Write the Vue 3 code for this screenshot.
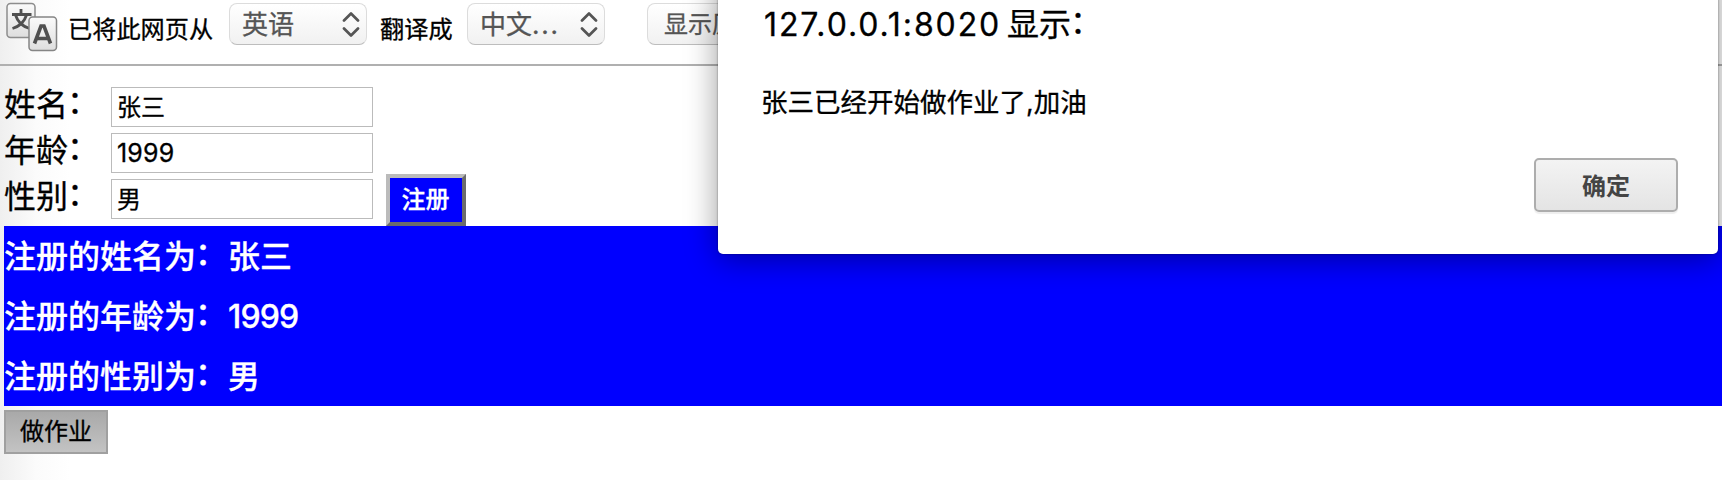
<script setup>
const fields = [
  { label: '姓名', value: '张三' },
  { label: '年龄', value: '1999' },
  { label: '性别', value: '男' },
]
</script>

<template>
  <div class="page">
    <header class="bar">
      <svg class="logo" width="54" height="54" viewBox="0 0 54 54">
        <defs>
          <linearGradient id="tile" x1="0" y1="0" x2="0" y2="1">
            <stop offset="0" stop-color="#fbfbfb" />
            <stop offset="1" stop-color="#dedede" />
          </linearGradient>
        </defs>
        <rect x="2" y="3.5" width="28" height="34" rx="3.5" fill="url(#tile)" stroke="#8d8d8d" stroke-width="1.5" />
        <path d="M16 9v4.500M7 14.500h19.500M10.500 15c2 6.500 6 11 14 13.500M21.500 15c-2 6.500-6 11-14 13.500" fill="none" stroke="#505050" stroke-width="2.800" />
        <rect x="24" y="17" width="27.500" height="33.500" rx="3.500" fill="url(#tile)" stroke="#858585" stroke-width="1.500" />
        <path d="M29.500 43.500 36 26h3l6.500 17.500M32 38.500h11.500" fill="none" stroke="#505050" stroke-width="3.600" />
      </svg>
      <span class="bar-text from">已将此网页从</span>
      <div class="select first">
        <span>英语</span>
        <svg width="18" height="26" viewBox="0 0 18 26"><path d="M2 9.500 9 2.500l7 7M2 17.500l7 7 7-7" /></svg>
      </div>
      <span class="bar-text to">翻译成</span>
      <div class="select second">
        <span>中文<i class="dots">...</i></span>
        <svg width="18" height="26" viewBox="0 0 18 26"><path d="M2 9.500 9 2.500l7 7M2 17.500l7 7 7-7" /></svg>
      </div>
      <div class="original">显示原文</div>
    </header>

    <main class="content">
      <form class="form" @submit.prevent>
        <div v-for="(f, i) in fields" :key="f.label" class="row">
          <label>{{ f.label }}<span class="colon">：</span></label>
          <div class="input" :class="{ latin: i === 1 }"><span>{{ f.value }}</span></div>
          <button v-if="i === 2" class="register"><span>注册</span></button>
        </div>
      </form>
      <section class="result">
        <p v-for="(f, i) in fields" :key="f.label">注册的{{ f.label }}为<span class="colon">：</span><span :class="{ year: i === 1 }">{{ f.value }}</span></p>
      </section>
      <button class="homework">做作业</button>
    </main>

    <div class="dialog">
      <h1><span class="host">127.0.0.1:8020</span>显示<span class="colon">：</span></h1>
      <p class="message">张三已经开始做作业了,加油</p>
      <button class="ok">确定</button>
    </div>
  </div>
</template>

<style>
html, body { margin: 0; background: #fff; }
</style>

<style scoped>
.page {
  position: relative;
  width: 1722px;
  height: 480px;
  overflow: hidden;
  color: #000;
  background: linear-gradient(90deg, #efefef 0, #fbfbfb 36px, #fff 70px);
  font-family: Inter, "Noto Sans CJK SC", sans-serif;
  -webkit-text-stroke-width: .3px;
}
button { font-family: inherit; box-sizing: border-box; padding: 0; margin: 0; }
.bar {
  box-sizing: border-box;
  height: 66px;
  border-bottom: 2px solid #b0b0b0;
  display: flex;
  align-items: flex-start;
  padding-left: 5px;
  white-space: nowrap;
}
.logo { flex: none; }
.bar-text { font-size: 24.2px; line-height: 36px; padding-top: 12px; }
.from { width: 161px; margin-left: 9px; }
.to { width: 87px; margin-left: 13px; }
.select, .original {
  box-sizing: border-box;
  height: 42px;
  margin-top: 3px;
  border: 1px solid #dcdcdc;
  border-bottom-color: #bdbdbd;
  border-radius: 8px;
  background: linear-gradient(#fff, #f1f1f1);
  color: #555;
}
.select {
  flex: none;
  width: 138px;
  display: flex;
  align-items: center;
  justify-content: space-between;
  padding: 0 6px 0 12px;
  font-size: 26px;
  line-height: 40px;
}
.select span { padding-top: 2px; }
.select path { fill: none; stroke: #555; stroke-width: 2.7; stroke-linecap: round; stroke-linejoin: round; }
.dots { font-style: normal; letter-spacing: 1.8px; }
.original { flex: none; width: 150px; margin-left: 42px; padding-left: 16px; font-size: 24px; line-height: 42px; }
.content { padding: 21px 0 0 4px; }
.row { display: flex; height: 46px; align-items: flex-start; }
label { width: 107px; font-size: 32px; line-height: 36px; white-space: nowrap; }
.colon { display: inline-block; width: 1em; transform: translate(-1px, -3px); }
.input {
  box-sizing: border-box;
  width: 262px;
  height: 40px;
  padding-left: 5px;
  border: 1px solid #bbb;
  background: #fff;
  font-size: 24px;
  line-height: 40px;
}
.latin { font-size: 25px; line-height: 39px; letter-spacing: .2px; }
.register {
  width: 80px;
  height: 52px;
  margin: -5px 0 0 13px;
  border: 4px solid;
  border-color: #bbb #6c6c6c #6c6c6c #bbb;
  background: #00f;
  color: #fff;
  font-size: 24px;
  font-weight: 500;
  line-height: 42px;
}
.register span { margin-left: -1px; }
.result { margin-top: 1px; height: 180px; background: #00f; color: #fff; font-size: 32px; font-weight: 500; }
.result p { margin: 0; height: 60px; line-height: 62px; }
.year { letter-spacing: -.9px; }
.homework {
  display: block;
  width: 104px;
  height: 44px;
  margin-top: 4px;
  border: 2px solid #a0a0a0;
  background: linear-gradient(#a9a9a9, #c3c3c3);
  font-size: 24px;
  line-height: 38px;
  color: #000;
}
.dialog {
  position: absolute;
  box-sizing: border-box;
  left: 718px;
  top: -30px;
  width: 1000px;
  height: 284px;
  padding: 30px 40px 0 44px;
  background: #fff;
  border-radius: 0 0 5px 5px;
  box-shadow: 0 0 2px rgba(0, 0, 0, .5), 0 4px 32px rgba(0, 0, 0, .4);
  display: flex;
  flex-direction: column;
}
h1 { margin: 0; height: 50px; font-size: 32px; font-weight: 400; line-height: 50px; white-space: nowrap; }
.host { display: inline-block; box-sizing: border-box; width: 245px; padding-left: 2px; letter-spacing: 1.9px; }
.message { margin: 32px 0 0 -1px; height: 40px; font-size: 26.5px; line-height: 40px; }
.ok {
  align-self: flex-end;
  width: 144px;
  height: 54px;
  margin-top: 36px;
  border: 2px solid #adadad;
  border-radius: 5px;
  background: linear-gradient(#f3f3f3, #e4e4e4);
  box-shadow: 0 2px 1px #eee;
  color: #444;
  font-size: 24px;
  font-weight: 700;
  line-height: 53px;
  -webkit-text-stroke-width: 0;
}
</style>
